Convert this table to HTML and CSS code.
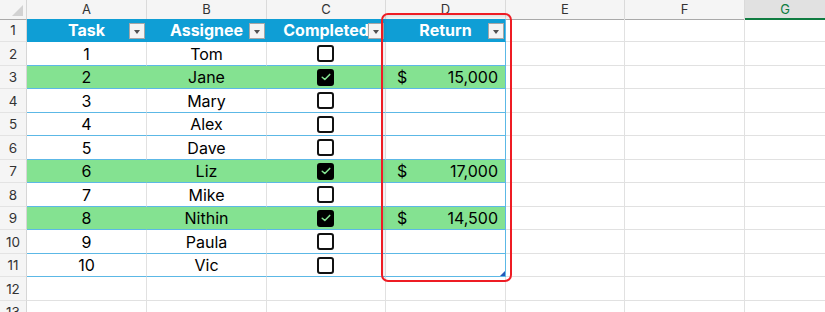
FILE: index.html
```html
<!DOCTYPE html>
<html>
<head>
<meta charset="utf-8">
<link rel="stylesheet" href="styles.css">
</head>
<body>
<div class="sheet">
  <div class="row head">
    <div class="corner"><span class="tri"></span></div>
    <div class="ch">A</div><div class="ch">B</div><div class="ch">C</div><div class="ch">D</div><div class="ch">E</div><div class="ch">F</div><div class="ch sel">G</div>
  </div>

  <div class="row h23">
    <div class="rh">1</div>
    <div class="c th">Task<span class="dd"></span></div>
    <div class="c th">Assignee<span class="dd"></span></div>
    <div class="c th">Completed<span class="dd"></span></div>
    <div class="c th last">Return<span class="dd"></span></div>
    <div class="c"></div><div class="c"></div><div class="c g"></div>
  </div>

  <div class="row h24">
    <div class="rh">2</div>
    <div class="c td">1</div><div class="c td">Tom</div>
    <div class="c td"><span class="cb"></span></div>
    <div class="c td last"></div>
    <div class="c"></div><div class="c"></div><div class="c g"></div>
  </div>

  <div class="row h23 green">
    <div class="rh">3</div>
    <div class="c td">2</div><div class="c td">Jane</div>
    <div class="c td"><span class="cb on"><svg viewBox="0 0 16 16" width="12" height="12"><path d="M3 8.3 L6.4 11.3 L13 4.6" fill="none" stroke="#84e291" stroke-width="2.1" stroke-linecap="round" stroke-linejoin="round"/></svg></span></div>
    <div class="c td last acc"><span>$</span><span>15,000</span></div>
    <div class="c"></div><div class="c"></div><div class="c g"></div>
  </div>

  <div class="row h24">
    <div class="rh">4</div>
    <div class="c td">3</div><div class="c td">Mary</div>
    <div class="c td"><span class="cb"></span></div>
    <div class="c td last"></div>
    <div class="c"></div><div class="c"></div><div class="c g"></div>
  </div>

  <div class="row h23">
    <div class="rh">5</div>
    <div class="c td">4</div><div class="c td">Alex</div>
    <div class="c td"><span class="cb"></span></div>
    <div class="c td last"></div>
    <div class="c"></div><div class="c"></div><div class="c g"></div>
  </div>

  <div class="row h24">
    <div class="rh">6</div>
    <div class="c td">5</div><div class="c td">Dave</div>
    <div class="c td"><span class="cb"></span></div>
    <div class="c td last"></div>
    <div class="c"></div><div class="c"></div><div class="c g"></div>
  </div>

  <div class="row h23 green">
    <div class="rh">7</div>
    <div class="c td">6</div><div class="c td">Liz</div>
    <div class="c td"><span class="cb on"><svg viewBox="0 0 16 16" width="12" height="12"><path d="M3 8.3 L6.4 11.3 L13 4.6" fill="none" stroke="#84e291" stroke-width="2.1" stroke-linecap="round" stroke-linejoin="round"/></svg></span></div>
    <div class="c td last acc"><span>$</span><span>17,000</span></div>
    <div class="c"></div><div class="c"></div><div class="c g"></div>
  </div>

  <div class="row h24">
    <div class="rh">8</div>
    <div class="c td">7</div><div class="c td">Mike</div>
    <div class="c td"><span class="cb"></span></div>
    <div class="c td last"></div>
    <div class="c"></div><div class="c"></div><div class="c g"></div>
  </div>

  <div class="row h23 green">
    <div class="rh">9</div>
    <div class="c td">8</div><div class="c td">Nithin</div>
    <div class="c td"><span class="cb on"><svg viewBox="0 0 16 16" width="12" height="12"><path d="M3 8.3 L6.4 11.3 L13 4.6" fill="none" stroke="#84e291" stroke-width="2.1" stroke-linecap="round" stroke-linejoin="round"/></svg></span></div>
    <div class="c td last acc"><span>$</span><span>14,500</span></div>
    <div class="c"></div><div class="c"></div><div class="c g"></div>
  </div>

  <div class="row h24">
    <div class="rh">10</div>
    <div class="c td">9</div><div class="c td">Paula</div>
    <div class="c td"><span class="cb"></span></div>
    <div class="c td last"></div>
    <div class="c"></div><div class="c"></div><div class="c g"></div>
  </div>

  <div class="row h23">
    <div class="rh">11</div>
    <div class="c td">10</div><div class="c td">Vic</div>
    <div class="c td"><span class="cb"></span></div>
    <div class="c td last end"><span class="handle"></span></div>
    <div class="c"></div><div class="c"></div><div class="c g"></div>
  </div>

  <div class="row h24">
    <div class="rh">12</div>
    <div class="c"></div><div class="c"></div><div class="c"></div><div class="c"></div>
    <div class="c"></div><div class="c"></div><div class="c g"></div>
  </div>

  <div class="row h23">
    <div class="rh">13</div>
    <div class="c"></div><div class="c"></div><div class="c"></div><div class="c"></div>
    <div class="c"></div><div class="c"></div><div class="c g"></div>
  </div>

  <div class="highlight"></div>
</div>
</body>
</html>
```

FILE: styles.css
```css
* { box-sizing: border-box; }
html, body { margin: 0; padding: 0; background: #fff; overflow: hidden; }
body { width: 825px; height: 312px; }

.sheet {
  position: relative;
  width: 825px;
  height: 312px;
  overflow: hidden;
  font-family: Inter, "Open Sans", "Liberation Sans", sans-serif;
}

.row {
  display: grid;
  grid-template-columns: 27px 120px 120px 119px 120px 119px 120px 1fr;
}
.head { height: 19px; }
.h23 { height: 23px; }
.h24 { height: 24px; }

.corner {
  position: relative;
  background: #f5f5f5;
  border-right: 1px solid #d6d6d6;
  border-bottom: 1px solid #a9a9a9;
}
.tri {
  position: absolute;
  right: 3px;
  bottom: 3px;
  width: 0;
  height: 0;
  border-left: 11px solid transparent;
  border-bottom: 11px solid #d2d2d2;
}

.ch {
  background: #f5f5f5;
  border-right: 1px solid #dadada;
  border-bottom: 1px solid #a9a9a9;
  color: #333;
  font-size: 13px;
  line-height: 18px;
  text-align: center;
}
.ch.sel {
  background: #e1e1e1;
  color: #107c41;
  border-bottom: 2px solid #107c41;
  border-right: none;
}

.rh {
  background: #f5f5f5;
  border-right: 1px solid #d6d6d6;
  border-bottom: 1px solid #e3e3e3;
  color: #333;
  font-size: 13.5px;
  display: flex;
  align-items: center;
  justify-content: center;
}

.c {
  border-right: 1px solid #e1e1e1;
  border-bottom: 1px solid #e1e1e1;
  font-size: 16px;
  color: #000;
  display: flex;
  align-items: center;
  justify-content: center;
  white-space: nowrap;
  overflow: hidden;
}
.c.g { border-right: none; }

.th {
  position: relative;
  background: #0f9ed5;
  color: #fff;
  font-weight: 700;
  border-right-color: #0f9ed5;
  border-bottom-color: #0f9ed5;
  overflow: visible;
}
.th.last { border-right-color: #5cb8e6; }

.dd {
  position: absolute;
  right: 1px;
  top: 4px;
  width: 16px;
  height: 16px;
  background: #f4f4f4;
  border: 1px solid #a6a6a6;
}
.dd::after {
  content: "";
  position: absolute;
  left: 4px;
  top: 6px;
  width: 0;
  height: 0;
  border-left: 3.5px solid transparent;
  border-right: 3.5px solid transparent;
  border-top: 4px solid #505050;
}

.td { border-bottom: 1px solid #5cb8e6; }
.td.last { border-right: 1px solid #5cb8e6; }
.green .td { background: #84e291; border-right-color: #84e291; }
.green .td.last { border-right-color: #5cb8e6; }

.acc {
  justify-content: space-between;
  padding: 0 7px 0 11px;
}

.cb {
  display: inline-flex;
  align-items: center;
  justify-content: center;
  width: 17px;
  height: 17px;
  border: 2px solid #111;
  border-radius: 3px;
  background: #fff;
  margin-left: -1px;
}
.cb.on { background: #000; border-color: #000; }

.end { position: relative; }
.handle {
  position: absolute;
  right: 0;
  bottom: 0;
  width: 0;
  height: 0;
  border-left: 5px solid transparent;
  border-bottom: 5px solid #2457b8;
}

.highlight {
  position: absolute;
  left: 381px;
  top: 13px;
  width: 131px;
  height: 269px;
  border: 2px solid #ee1c24;
  border-radius: 7px;
  box-shadow: inset 2px 2px 3px rgba(0,0,0,0.08);
  pointer-events: none;
}
```
